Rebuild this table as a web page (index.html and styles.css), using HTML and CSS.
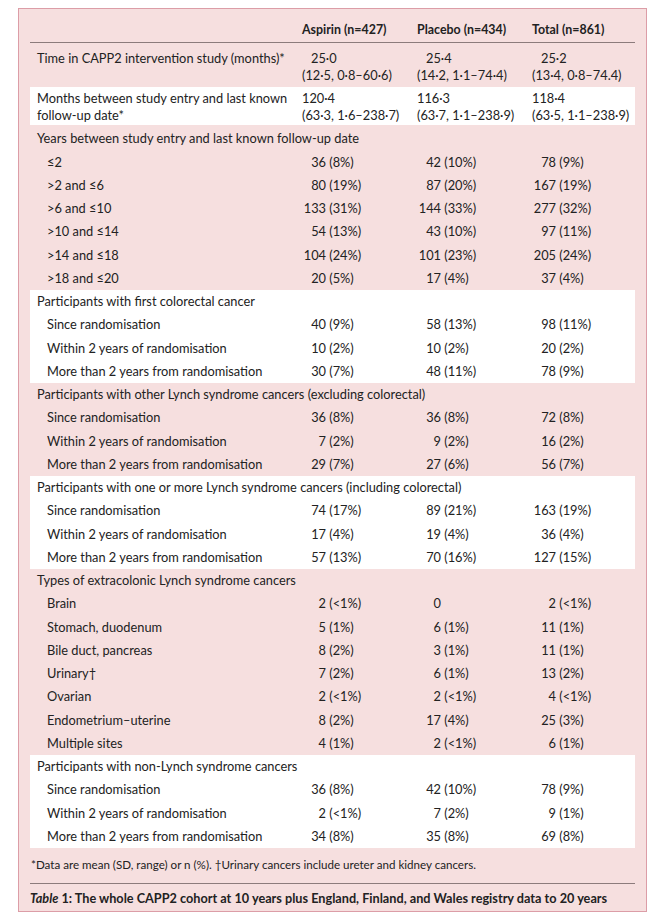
FILE: index.html
```html
<!DOCTYPE html>
<html lang="en">
<head>
<meta charset="utf-8">
<title>Table 1: The whole CAPP2 cohort</title>
<link rel="stylesheet" href="styles.css">
</head>
<body>
<div class="card">
  <div class="tbl">
    <div class="row head">
      <div class="lab"></div>
      <div class="c">Aspirin (n=427)</div>
      <div class="c">Placebo (n=434)</div>
      <div class="c">Total (n=861)</div>
    </div>

    <div class="row multi first">
      <div class="lab">Time in CAPP2 intervention study (months)*</div>
      <div class="c"><span class="ind">25·0</span><br>(12·5, 0·8–60·6)</div>
      <div class="c"><span class="ind">25·4</span><br>(14·2, 1·1–74·4)</div>
      <div class="c"><span class="ind">25·2</span><br>(13·4, 0·8–74.4)</div>
    </div>

    <div class="row multi white second">
      <div class="lab">Months between study entry and last known<br>follow-up date*</div>
      <div class="c">120·4<br>(63·3, 1·6–238·7)</div>
      <div class="c">116·3<br>(63·7, 1·1–238·9)</div>
      <div class="c">118·4<br>(63·5, 1·1–238·9)</div>
    </div>

    <div class="group years">
      <div class="row"><div class="lab span">Years between study entry and last known follow-up date</div></div>
      <div class="row"><div class="lab sub">≤2</div><div class="c"><span class="n">36</span> (8%)</div><div class="c"><span class="n">42</span> (10%)</div><div class="c"><span class="n">78</span> (9%)</div></div>
      <div class="row"><div class="lab sub">&gt;2 and ≤6</div><div class="c"><span class="n">80</span> (19%)</div><div class="c"><span class="n">87</span> (20%)</div><div class="c"><span class="n">167</span> (19%)</div></div>
      <div class="row"><div class="lab sub">&gt;6 and ≤10</div><div class="c"><span class="n">133</span> (31%)</div><div class="c"><span class="n">144</span> (33%)</div><div class="c"><span class="n">277</span> (32%)</div></div>
      <div class="row"><div class="lab sub">&gt;10 and ≤14</div><div class="c"><span class="n">54</span> (13%)</div><div class="c"><span class="n">43</span> (10%)</div><div class="c"><span class="n">97</span> (11%)</div></div>
      <div class="row"><div class="lab sub">&gt;14 and ≤18</div><div class="c"><span class="n">104</span> (24%)</div><div class="c"><span class="n">101</span> (23%)</div><div class="c"><span class="n">205</span> (24%)</div></div>
      <div class="row"><div class="lab sub">&gt;18 and ≤20</div><div class="c"><span class="n">20</span> (5%)</div><div class="c"><span class="n">17</span> (4%)</div><div class="c"><span class="n">37</span> (4%)</div></div>
    </div>

    <div class="group white">
      <div class="row"><div class="lab span">Participants with first colorectal cancer</div></div>
      <div class="row"><div class="lab sub">Since randomisation</div><div class="c"><span class="n">40</span> (9%)</div><div class="c"><span class="n">58</span> (13%)</div><div class="c"><span class="n">98</span> (11%)</div></div>
      <div class="row"><div class="lab sub">Within 2 years of randomisation</div><div class="c"><span class="n">10</span> (2%)</div><div class="c"><span class="n">10</span> (2%)</div><div class="c"><span class="n">20</span> (2%)</div></div>
      <div class="row"><div class="lab sub">More than 2 years from randomisation</div><div class="c"><span class="n">30</span> (7%)</div><div class="c"><span class="n">48</span> (11%)</div><div class="c"><span class="n">78</span> (9%)</div></div>
    </div>

    <div class="group">
      <div class="row"><div class="lab span">Participants with other Lynch syndrome cancers (excluding colorectal)</div></div>
      <div class="row"><div class="lab sub">Since randomisation</div><div class="c"><span class="n">36</span> (8%)</div><div class="c"><span class="n">36</span> (8%)</div><div class="c"><span class="n">72</span> (8%)</div></div>
      <div class="row"><div class="lab sub">Within 2 years of randomisation</div><div class="c"><span class="n">7</span> (2%)</div><div class="c"><span class="n">9</span> (2%)</div><div class="c"><span class="n">16</span> (2%)</div></div>
      <div class="row"><div class="lab sub">More than 2 years from randomisation</div><div class="c"><span class="n">29</span> (7%)</div><div class="c"><span class="n">27</span> (6%)</div><div class="c"><span class="n">56</span> (7%)</div></div>
    </div>

    <div class="group white">
      <div class="row"><div class="lab span">Participants with one or more Lynch syndrome cancers (including colorectal)</div></div>
      <div class="row"><div class="lab sub">Since randomisation</div><div class="c"><span class="n">74</span> (17%)</div><div class="c"><span class="n">89</span> (21%)</div><div class="c"><span class="n">163</span> (19%)</div></div>
      <div class="row"><div class="lab sub">Within 2 years of randomisation</div><div class="c"><span class="n">17</span> (4%)</div><div class="c"><span class="n">19</span> (4%)</div><div class="c"><span class="n">36</span> (4%)</div></div>
      <div class="row"><div class="lab sub">More than 2 years from randomisation</div><div class="c"><span class="n">57</span> (13%)</div><div class="c"><span class="n">70</span> (16%)</div><div class="c"><span class="n">127</span> (15%)</div></div>
    </div>

    <div class="group">
      <div class="row"><div class="lab span">Types of extracolonic Lynch syndrome cancers</div></div>
      <div class="row"><div class="lab sub">Brain</div><div class="c"><span class="n">2</span> (&lt;1%)</div><div class="c"><span class="n">0</span></div><div class="c"><span class="n">2</span> (&lt;1%)</div></div>
      <div class="row"><div class="lab sub">Stomach, duodenum</div><div class="c"><span class="n">5</span> (1%)</div><div class="c"><span class="n">6</span> (1%)</div><div class="c"><span class="n">11</span> (1%)</div></div>
      <div class="row"><div class="lab sub">Bile duct, pancreas</div><div class="c"><span class="n">8</span> (2%)</div><div class="c"><span class="n">3</span> (1%)</div><div class="c"><span class="n">11</span> (1%)</div></div>
      <div class="row"><div class="lab sub">Urinary†</div><div class="c"><span class="n">7</span> (2%)</div><div class="c"><span class="n">6</span> (1%)</div><div class="c"><span class="n">13</span> (2%)</div></div>
      <div class="row"><div class="lab sub">Ovarian</div><div class="c"><span class="n">2</span> (&lt;1%)</div><div class="c"><span class="n">2</span> (&lt;1%)</div><div class="c"><span class="n">4</span> (&lt;1%)</div></div>
      <div class="row"><div class="lab sub">Endometrium–uterine</div><div class="c"><span class="n">8</span> (2%)</div><div class="c"><span class="n">17</span> (4%)</div><div class="c"><span class="n">25</span> (3%)</div></div>
      <div class="row"><div class="lab sub">Multiple sites</div><div class="c"><span class="n">4</span> (1%)</div><div class="c"><span class="n">2</span> (&lt;1%)</div><div class="c"><span class="n">6</span> (1%)</div></div>
    </div>

    <div class="group white">
      <div class="row"><div class="lab span">Participants with non-Lynch syndrome cancers</div></div>
      <div class="row"><div class="lab sub">Since randomisation</div><div class="c"><span class="n">36</span> (8%)</div><div class="c"><span class="n">42</span> (10%)</div><div class="c"><span class="n">78</span> (9%)</div></div>
      <div class="row"><div class="lab sub">Within 2 years of randomisation</div><div class="c"><span class="n">2</span> (&lt;1%)</div><div class="c"><span class="n">7</span> (2%)</div><div class="c"><span class="n">9</span> (1%)</div></div>
      <div class="row"><div class="lab sub">More than 2 years from randomisation</div><div class="c"><span class="n">34</span> (8%)</div><div class="c"><span class="n">35</span> (8%)</div><div class="c"><span class="n">69</span> (8%)</div></div>
    </div>
  </div>

  <p class="foot">*Data are mean (SD, range) or n (%). †Urinary cancers include ureter and kidney cancers.</p>
  <p class="caption"><i>Table</i> 1: The whole CAPP2 cohort at 10 years plus England, Finland, and Wales registry data to 20 years</p>
</div>
</body>
</html>
```
FILE: styles.css
```css
html, body {
  margin: 0;
  padding: 0;
  background: #ffffff;
}

body {
  padding: 8px 0 0 18px;
  font-family: Lato, "Noto Sans", sans-serif;
  color: #222222;
}

.card {
  width: 629px;
  box-sizing: border-box;
  border: 1px solid #dc9da7;
  background: #f6dfdf;
  padding: 0 11px;
}

.tbl {
  font-size: 12.8px;
}

.row {
  display: grid;
  grid-template-columns: 272px 115px 115px 1fr;
  height: 23.25px;
  line-height: 23.25px;
  white-space: nowrap;
}

.lab {
  padding-left: 7px;
}

.lab.span {
  grid-column: 1 / -1;
}

.lab.sub {
  padding-left: 17px;
}

.n {
  display: inline-block;
  width: 24px;
  text-align: right;
}

.ind {
  padding-left: 9px;
}

.head {
  height: auto;
  line-height: 17px;
  padding: 12px 0 4px;
  border-bottom: 1px solid #8c7b7c;
  font-weight: 700;
  font-size: 12.4px;
}

.multi {
  height: auto;
  line-height: 17px;
}

.first {
  padding: 6.5px 0 3.5px;
}

.second {
  padding: 3px 0 1px;
}

.white {
  background: #ffffff;
}

.years {
  padding-top: 2.4px;
}

.foot {
  margin: 0;
  padding: 7.5px 0 0 1px;
  line-height: 17px;
  font-size: 11.6px;
}

.caption {
  margin: 10.4px 0 0;
  padding: 6px 0 4px;
  border-top: 1px solid #8c7b7c;
  line-height: 17px;
  font-size: 12.7px;
  font-weight: 700;
  white-space: nowrap;
}

.caption i {
  font-style: italic;
}
```
